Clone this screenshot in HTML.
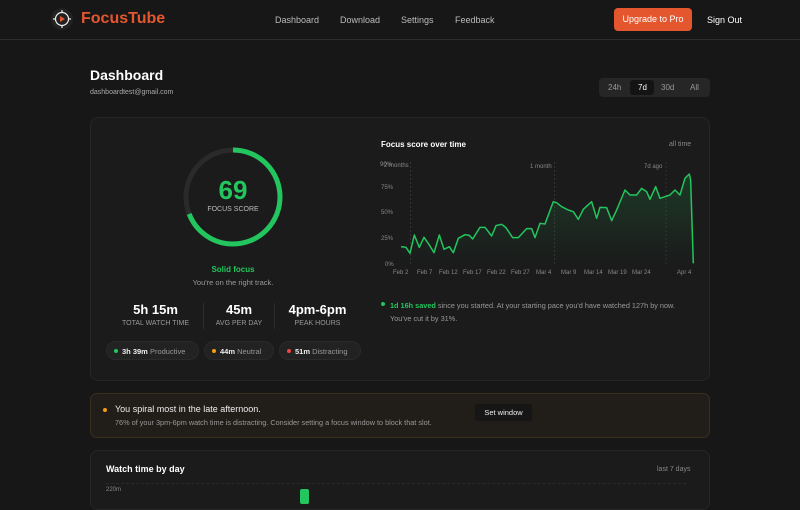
<!DOCTYPE html>
<html><head><meta charset="utf-8"><style>
*{margin:0;padding:0;box-sizing:border-box}
body{width:800px;height:500px;overflow:hidden;background:#171717;font-family:"Liberation Sans",sans-serif;color:#eee;position:relative}
.a{position:absolute;white-space:nowrap}
.nav{font-size:9px;color:#bbb}
.card{position:absolute;background:#1b1b1b;border:1px solid #262626;border-radius:8px}
</style></head><body>
<div class="a" style="left:0;top:39px;width:800px;height:1px;background:#2c2c2c"></div>
<svg class="a" style="left:50px;top:7px" width="26" height="26" viewBox="0 0 26 26">
<circle cx="12" cy="12" r="11" fill="#222"/>
<circle cx="12" cy="12" r="6.5" fill="none" stroke="#eee" stroke-width="1.2"/>
<path d="M12 3v3M12 18v3M3 12h3M18 12h3" stroke="#eee" stroke-width="1.2"/>
<path d="M10 9l5 3-5 3z" fill="#e4572e"/>
</svg>
<div class="a" style="left:81px;top:10px;font-size:16px;font-weight:bold;color:#e4572e">FocusTube</div>
<div class="a nav" style="left:275px;top:15px">Dashboard</div>
<div class="a nav" style="left:340px;top:15px">Download</div>
<div class="a nav" style="left:401px;top:15px">Settings</div>
<div class="a nav" style="left:455px;top:15px">Feedback</div>
<div class="a" style="left:614px;top:8px;width:78px;height:23px;background:#e4572e;border-radius:4px;font-size:9px;color:#fff;text-align:center;line-height:23px">Upgrade to Pro</div>
<div class="a" style="left:707px;top:15px;font-size:9px;color:#fff">Sign Out</div>

<div class="a" style="left:90px;top:67px;font-size:14px;font-weight:bold;color:#fff">Dashboard</div>
<div class="a" style="left:90px;top:89px;font-size:7px;color:#aaa">dashboardtest@gmail.com</div>
<div class="a" style="left:599px;top:78px;width:111px;height:19px;background:#262626;border-radius:4px"></div>
<div class="a" style="left:630px;top:80px;width:24px;height:15px;background:#141414;border-radius:3px"></div>
<div class="a" style="left:608px;top:83px;font-size:8px;color:#999">24h</div>
<div class="a" style="left:638px;top:83px;font-size:8px;color:#fff">7d</div>
<div class="a" style="left:661px;top:83px;font-size:8px;color:#999">30d</div>
<div class="a" style="left:690px;top:83px;font-size:8px;color:#999">All</div>

<div class="card" style="left:90px;top:117px;width:620px;height:264px"></div>
<svg class="a" style="left:180px;top:144px" width="106" height="106" viewBox="0 0 106 106">
<circle cx="53" cy="53" r="47" fill="none" stroke="#2a2a2a" stroke-width="5"/>
<circle cx="53" cy="53" r="47" fill="none" stroke="#22c55e" stroke-width="5" stroke-dasharray="203.8 295.3" transform="rotate(-90 53 53)" stroke-linecap="butt"/>
</svg>
<div class="a" style="left:183px;top:175px;width:100px;text-align:center;font-size:26px;font-weight:bold;color:#22c55e">69</div>
<div class="a" style="left:183px;top:206px;width:100px;text-align:center;font-size:7px;color:#bbb">FOCUS SCORE</div>
<div class="a" style="left:183px;top:265px;width:100px;text-align:center;font-size:8px;font-weight:bold;color:#22c55e">Solid focus</div>
<div class="a" style="left:163px;top:278px;width:140px;text-align:center;font-size:7.5px;color:#999">You're on the right track.</div>
<div class="a" style="left:113px;top:302px;width:85px;text-align:center;font-size:13px;font-weight:bold;color:#fff">5h 15m</div>
<div class="a" style="left:113px;top:320px;width:85px;text-align:center;font-size:7px;color:#999">TOTAL WATCH TIME</div>
<div class="a" style="left:203px;top:303px;width:1px;height:26px;background:#2c2c2c"></div>
<div class="a" style="left:200px;top:302px;width:78px;text-align:center;font-size:13px;font-weight:bold;color:#fff">45m</div>
<div class="a" style="left:200px;top:320px;width:78px;text-align:center;font-size:7px;color:#999">AVG PER DAY</div>
<div class="a" style="left:274px;top:303px;width:1px;height:26px;background:#2c2c2c"></div>
<div class="a" style="left:275px;top:302px;width:85px;text-align:center;font-size:13px;font-weight:bold;color:#fff">4pm-6pm</div>
<div class="a" style="left:275px;top:320px;width:85px;text-align:center;font-size:7px;color:#999">PEAK HOURS</div>

<div class="a" style="left:106px;top:341px;width:93px;height:19px;background:#222;border:1px solid #2a2a2a;border-radius:10px"></div>
<div class="a" style="left:114px;top:349px;width:4px;height:4px;border-radius:2px;background:#22c55e"></div>
<div class="a" style="left:122px;top:347px;font-size:7.5px;color:#999"><b style="color:#eee">3h 39m</b> Productive</div>
<div class="a" style="left:204px;top:341px;width:70px;height:19px;background:#222;border:1px solid #2a2a2a;border-radius:10px"></div>
<div class="a" style="left:212px;top:349px;width:4px;height:4px;border-radius:2px;background:#f59e0b"></div>
<div class="a" style="left:220px;top:347px;font-size:7.5px;color:#999"><b style="color:#eee">44m</b> Neutral</div>
<div class="a" style="left:279px;top:341px;width:82px;height:19px;background:#222;border:1px solid #2a2a2a;border-radius:10px"></div>
<div class="a" style="left:287px;top:349px;width:4px;height:4px;border-radius:2px;background:#ef4444"></div>
<div class="a" style="left:295px;top:347px;font-size:7.5px;color:#999"><b style="color:#eee">51m</b> Distracting</div>

<div class="a" style="left:381px;top:140px;font-size:8px;font-weight:bold;color:#fff">Focus score over time</div>
<div class="a" style="left:669px;top:141px;font-size:7px;color:#888">all time</div>
<svg class="a" style="left:0;top:0" width="800" height="500">
<defs><linearGradient id="g" x1="0" y1="0" x2="0" y2="1"><stop offset="0" stop-color="#22c55e" stop-opacity="0.18"/><stop offset="1" stop-color="#22c55e" stop-opacity="0"/></linearGradient></defs>
<g stroke="#444" stroke-width="0.6" stroke-dasharray="2 2">
<line x1="410.7" y1="162" x2="410.7" y2="264"/><line x1="554.3" y1="162" x2="554.3" y2="264"/><line x1="666" y1="162" x2="666" y2="264"/>
</g>
<g font-size="6" fill="#888" font-family="Liberation Sans">
<text x="380" y="166">90%</text><text x="381" y="189">75%</text><text x="381" y="214">50%</text><text x="381" y="240">25%</text><text x="385" y="266">0%</text>
<text x="384" y="167">2 months</text><text x="530" y="168">1 month</text><text x="644" y="168">7d ago</text>
<text x="393" y="274">Feb 2</text><text x="417" y="274">Feb 7</text><text x="439" y="274">Feb 12</text><text x="463" y="274">Feb 17</text><text x="487" y="274">Feb 22</text><text x="511" y="274">Feb 27</text><text x="536" y="274">Mar 4</text><text x="561" y="274">Mar 9</text><text x="584" y="274">Mar 14</text><text x="608" y="274">Mar 19</text><text x="632" y="274">Mar 24</text><text x="677" y="274">Apr 4</text>
</g>
<g transform="translate(370,130) scale(0.3333)">
<path d="M93,350L108,352L120,370L133,315L148,352L162,322L178,345L192,368L208,315L222,358L238,350L250,368L265,325L285,314L298,316L308,327L330,292L345,292L365,318L378,287L395,283L408,293L428,323L445,323L470,296L485,296L495,323L510,280L525,282L550,215L560,218L575,230L595,240L610,245L625,268L640,238L665,215L680,265L690,232L710,233L725,272L740,240L765,180L780,195L800,195L815,175L830,185L840,208L857,170L870,205L885,200L900,195L915,180L930,195L945,145L958,132L962,150L970,400L93,400Z" fill="url(#g)"/>
<path d="M93,350L108,352L120,370L133,315L148,352L162,322L178,345L192,368L208,315L222,358L238,350L250,368L265,325L285,314L298,316L308,327L330,292L345,292L365,318L378,287L395,283L408,293L428,323L445,323L470,296L485,296L495,323L510,280L525,282L550,215L560,218L575,230L595,240L610,245L625,268L640,238L665,215L680,265L690,232L710,233L725,272L740,240L765,180L780,195L800,195L815,175L830,185L840,208L857,170L870,205L885,200L900,195L915,180L930,195L945,145L958,132L962,150L970,400" fill="none" stroke="#22c55e" stroke-width="4.5" stroke-linejoin="round"/>
</g>
</svg>
<div class="a" style="left:381px;top:302px;width:4px;height:4px;border-radius:2px;background:#22c55e"></div>
<div class="a" style="left:390px;top:299px;font-size:7.3px;color:#999;line-height:13px;white-space:normal;width:300px"><b style="color:#22c55e">1d 16h saved</b> since you started. At your starting pace you'd have watched 127h by now. You've cut it by 31%.</div>

<div class="a" style="left:90px;top:393px;width:620px;height:45px;background:#211d18;border:1px solid #3a2f1f;border-radius:7px"></div>
<div class="a" style="left:103px;top:408px;width:4px;height:4px;border-radius:2px;background:#f59e0b"></div>
<div class="a" style="left:115px;top:404px;font-size:9px;color:#eee">You spiral most in the late afternoon.</div>
<div class="a" style="left:115px;top:418px;font-size:7.3px;color:#999">76% of your 3pm-6pm watch time is distracting. Consider setting a focus window to block that slot.</div>
<div class="a" style="left:475px;top:404px;width:57px;height:17px;background:#161616;border-radius:3px;font-size:7.5px;color:#eee;text-align:center;line-height:17px">Set window</div>

<div class="card" style="left:90px;top:450px;width:620px;height:60px"></div>
<div class="a" style="left:106px;top:464px;font-size:9px;font-weight:bold;color:#fff">Watch time by day</div>
<div class="a" style="left:657px;top:466px;font-size:7px;color:#888">last 7 days</div>
<div class="a" style="left:106px;top:487px;font-size:6px;color:#888">220m</div>
<div class="a" style="left:106px;top:483px;width:580px;border-top:1px dashed #2a2a2a"></div>
<div class="a" style="left:300px;top:489px;width:9px;height:15px;background:#22c55e;border-radius:2px"></div>
</body></html>
